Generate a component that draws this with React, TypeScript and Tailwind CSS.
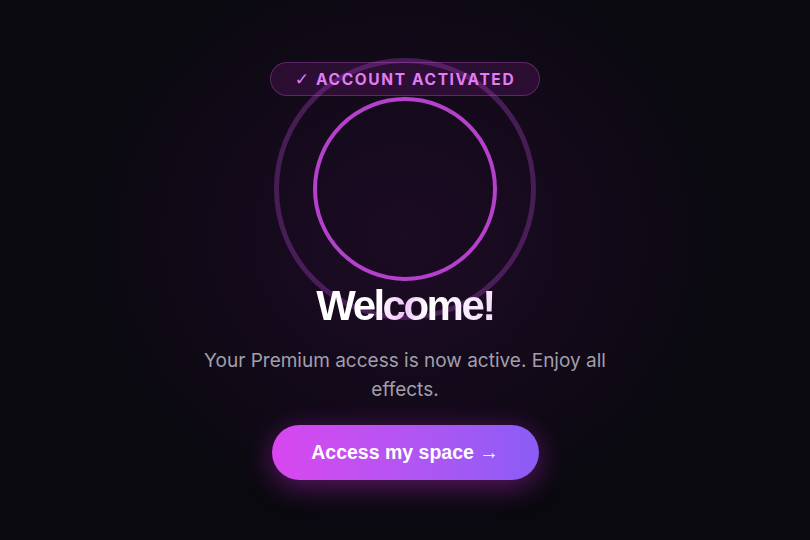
export default function App() {
  return (
    <div className="relative min-h-screen w-full overflow-hidden bg-[#0a090f] font-['Inter',sans-serif]">
      <div className="pointer-events-none absolute inset-0 bg-[radial-gradient(ellipse_330px_300px_at_50%_44%,#1f0c27_0%,#150a1c_45%,#0a090f_100%)]" />

      <div className="relative flex flex-col items-center pt-[62px]">
        {/* badge */}
        <div className="relative z-10 flex h-[34px] w-[270px] items-center justify-center gap-[7px] rounded-full border border-[#e879f9]/25 bg-[#c026d3]/15 pt-[2px] text-[15.5px] font-bold uppercase tracking-[0.105em] text-[#e27cf5]">
          <span className="font-['DejaVu_Sans',sans-serif] text-[17px] font-bold tracking-normal">✓</span>
          <span>Account Activated</span>
        </div>

        {/* rings */}
        <div className="relative mt-px h-[184px] w-[184px]">
          <div className="absolute left-1/2 top-1/2 h-[262px] w-[262px] -translate-x-1/2 -translate-y-1/2 rounded-full border-[5px] border-[#a742c4]/35" />
          <div className="absolute inset-0 rounded-full border-4 border-[#b440cc] bg-[#170a1d]/40" />
        </div>

        <h1 className="relative mt-[3px] bg-[linear-gradient(100deg,#ffffff_0%,#ffffff_35%,#f0c4fb_50%,#ffffff_62%,#f5dcfd_100%)] bg-clip-text font-['Liberation_Sans',Arial,sans-serif] text-[42px] font-bold leading-[44px] tracking-[-0.06em] text-transparent">
          Welcome!
        </h1>

        <p className="mt-[19px] max-w-[430px] text-center text-[19px] leading-[28.5px] text-[#a29fab]">
          Your Premium access is now active. Enjoy all effects.
        </p>

        <button className="mt-[21px] flex h-[55px] w-[267px] items-center justify-center rounded-full bg-gradient-to-r from-[#d946ef] to-[#8b5cf6] font-['Liberation_Sans',Arial,sans-serif] text-[19.5px] font-bold text-white shadow-[0_6px_28px_rgba(192,38,211,0.45)]">
          Access my space →
        </button>
      </div>
    </div>
  );
}
